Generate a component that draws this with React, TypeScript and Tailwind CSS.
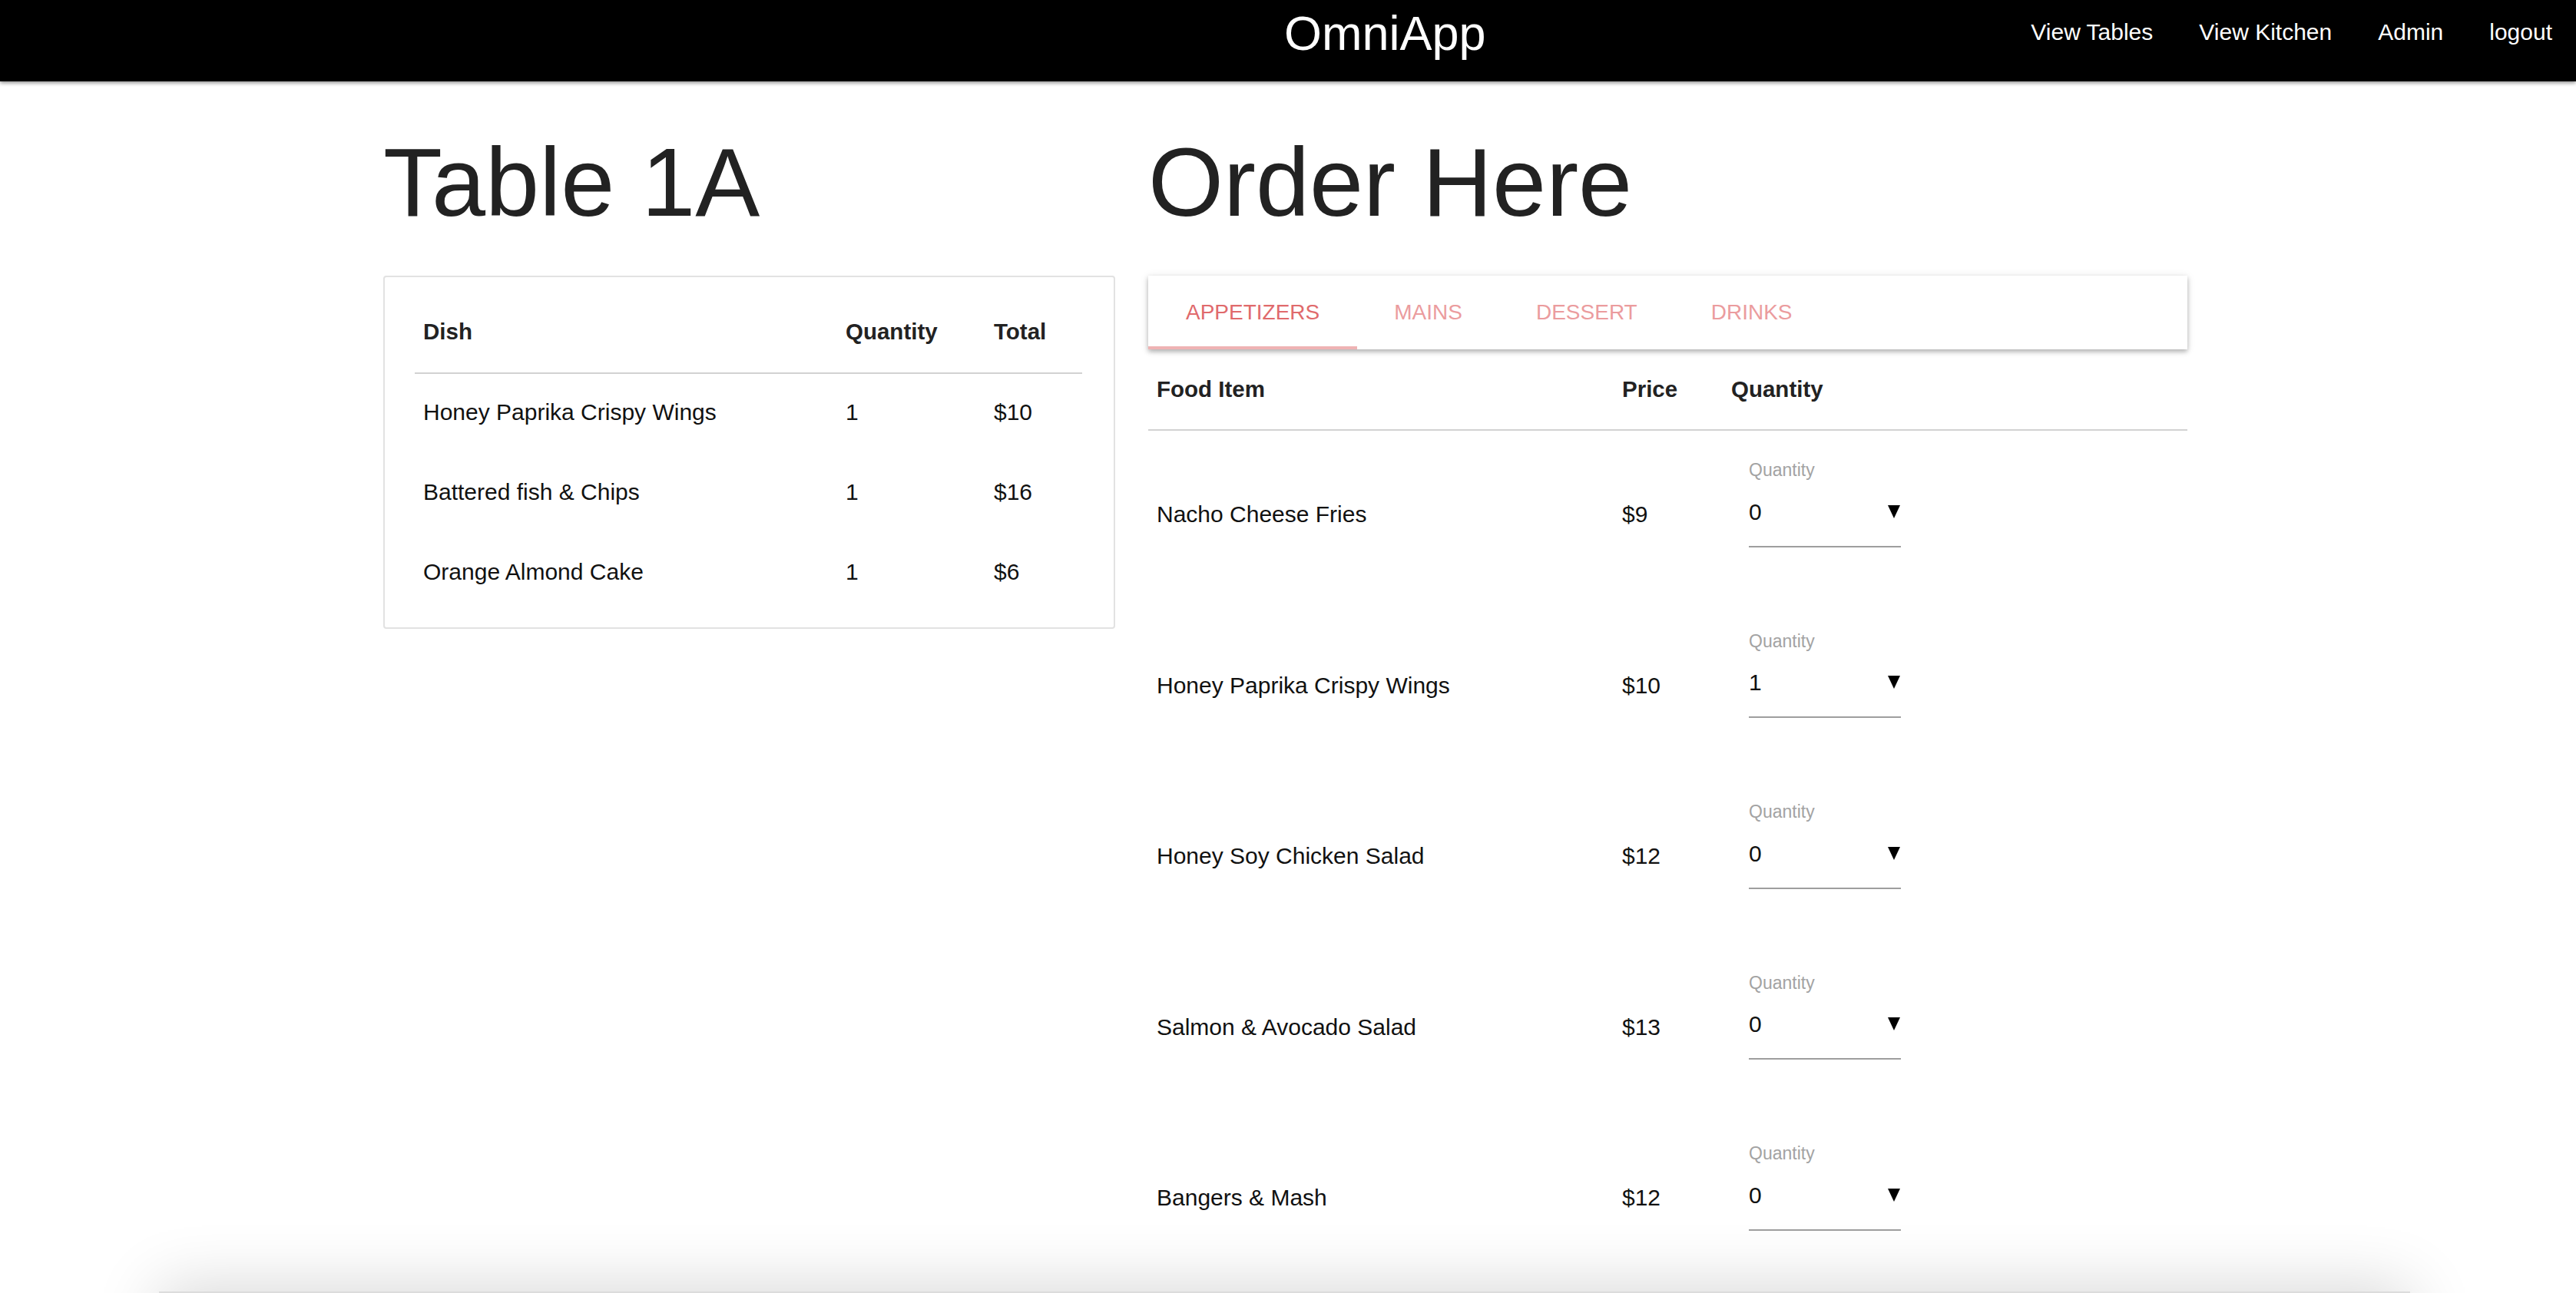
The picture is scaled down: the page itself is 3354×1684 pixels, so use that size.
import React from "react";

const font = { fontFamily: '"Liberation Sans", Arial, Helvetica, sans-serif' };

const orderRows: [string, string, string][] = [
  ["Honey Paprika Crispy Wings", "1", "$10"],
  ["Battered fish & Chips", "1", "$16"],
  ["Orange Almond Cake", "1", "$6"],
];

const menuRows: [string, string, string][] = [
  ["Nacho Cheese Fries", "$9", "0"],
  ["Honey Paprika Crispy Wings", "$10", "1"],
  ["Honey Soy Chicken Salad", "$12", "0"],
  ["Salmon & Avocado Salad", "$13", "0"],
  ["Bangers & Mash", "$12", "0"],
];

const tabs = ["APPETIZERS", "MAINS", "DESSERT", "DRINKS"];

function Header() {
  return (
    <div className="relative z-10 flex h-[106px] items-start bg-black text-white shadow-[0_2px_5px_rgba(0,0,0,0.45)]">
      <div className="ml-[1672px] pt-[12px] text-[63px] leading-[63px]">OmniApp</div>
      <nav className="ml-auto flex pt-[27px] text-[30px] leading-[30px]">
        <a className="px-[30px]">View Tables</a>
        <a className="px-[30px]">View Kitchen</a>
        <a className="px-[30px]">Admin</a>
        <a className="pl-[30px] pr-[31px]">logout</a>
      </nav>
    </div>
  );
}

function OrderCard() {
  return (
    <div className="mt-[58px] w-[953px] rounded-[4px] border-2 border-[#e2e2e2] bg-white pb-[18px] pl-[39px] pr-[41px] pt-[39px]">
      <div className="flex h-[87px] border-b-2 border-[#d2d2d2] pt-[15px] text-[29.5px] font-bold leading-[34px] text-[#222]">
        <div className="w-[550px] pl-[11px]">Dish</div>
        <div className="w-[193px] pl-[11px]">Quantity</div>
        <div className="flex-1 pl-[11px]">Total</div>
      </div>
      {orderRows.map(([dish, q, t]) => (
        <div key={dish} className="flex h-[104px] pt-[33px] text-[30px] leading-[34px] text-[#111]">
          <div className="w-[550px] pl-[11px]">{dish}</div>
          <div className="w-[193px] pl-[11px]">{q}</div>
          <div className="flex-1 pl-[11px]">{t}</div>
        </div>
      ))}
    </div>
  );
}

function Tabs() {
  return (
    <div className="mt-[58px] flex h-[96px] bg-white shadow-[0_3px_6px_rgba(0,0,0,0.28),0_1px_12px_rgba(0,0,0,0.08)]">
      {tabs.map((t, i) => (
        <div
          key={t}
          className={
            i === 0
              ? "relative flex h-full items-center px-[49px] text-[28px] leading-[32px] text-[#e06a6c]"
              : "relative flex h-full items-center px-[48px] text-[28px] leading-[32px] text-[#eb9c9e]"
          }
        >
          {t}
          {i === 0 && <div className="absolute bottom-0 left-0 right-0 h-[4px] bg-[#efb3b4]" />}
        </div>
      ))}
    </div>
  );
}

function Arrow() {
  return (
    <svg width="16" height="17" viewBox="0 0 16 17" className="absolute right-[1px] top-[8px]">
      <polygon points="0,0 16,0 8,17" fill="#000" />
    </svg>
  );
}

function MenuTable() {
  return (
    <div>
      <div className="flex h-[106px] border-b-2 border-[#d2d2d2] pt-[35px] text-[29.5px] font-bold leading-[34px] text-[#222]">
        <div className="w-[605px] pl-[11px]">Food Item</div>
        <div className="w-[142px] pl-[12px]">Price</div>
        <div className="flex-1 pl-[12px]">Quantity</div>
      </div>
      {menuRows.map(([name, price, qty]) => (
        <div key={name} className="flex h-[222.5px] text-[30px] leading-[34px] text-[#111]">
          <div className="w-[605px] pl-[11px] pt-[92px]">{name}</div>
          <div className="w-[142px] pl-[12px] pt-[92px]">{price}</div>
          <div className="flex-1 pl-[12px]">
            <div className="ml-[23px] w-[198px] pt-[38px]">
              <div className="text-[23px] leading-[26px] text-[#a3a3a3]">Quantity</div>
              <div className="relative mt-[24.5px] h-[34px] text-[#111]">
                {qty}
                <Arrow />
              </div>
              <div className="mt-[27px] h-[2px] bg-[#9e9e9e]" />
            </div>
          </div>
        </div>
      ))}
    </div>
  );
}

export default function App() {
  return (
    <div className="relative h-[1684px] w-full overflow-hidden bg-white" style={font}>
      <Header />
      <div className="flex gap-[43px] pl-[499px] pt-[69px]">
        <div className="w-[953px]">
          <h1 className="text-[126px] font-normal leading-[126px] text-[#222]">Table 1A</h1>
          <OrderCard />
        </div>
        <div className="w-[1353px]">
          <h1 className="text-[126px] font-normal leading-[126px] text-[#222]">Order Here</h1>
          <Tabs />
          <MenuTable />
        </div>
      </div>
      <div className="ml-[207px] mt-[8.5px] h-[300px] w-[2931px] border-t-2 border-[#dcdcdc] bg-[#f7f7f7] shadow-[0_-6px_80px_rgba(0,0,0,0.16)]" />
    </div>
  );
}
